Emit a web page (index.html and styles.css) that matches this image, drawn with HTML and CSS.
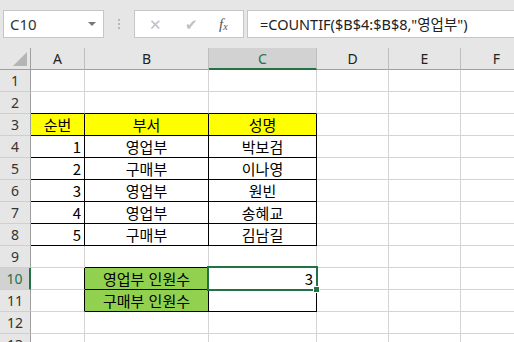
FILE: index.html
```html
<!DOCTYPE html>
<html lang="ko">
<head>
  <meta charset="UTF-8" />
  <title>COUNTIF</title>
  <link rel="stylesheet" href="styles.css">
</head>
<body>
  <div class="toolbar">
    <div class="namebox"><span>C10</span><span class="caret"></span></div>
    <div class="sep"><i></i><i></i><i></i></div>
    <div class="fxbox">
      <span class="btn">&#x2715;</span>
      <span class="btn check">&#x2714;</span>
      <span class="fx">f<sub>x</sub></span>
    </div>
    <div class="formula">=COUNTIF($B$4:$B$8,"영업부")</div>
  </div>

  <div class="sheet">
    <div class="ch corner"><span class="tri"></span></div><div class="ch">A</div><div class="ch">B</div><div class="ch sel">C</div><div class="ch">D</div><div class="ch">E</div><div class="ch">F</div>

    <div class="rh">1</div><div class="c"></div><div class="c"></div><div class="c"></div><div class="c"></div><div class="c"></div><div class="c"></div>
    <div class="rh">2</div><div class="c kb"></div><div class="c kb"></div><div class="c kb"></div><div class="c"></div><div class="c"></div><div class="c"></div>
    <div class="rh">3</div><div class="c kr kb yellow mid">순번</div><div class="c kr kb yellow mid">부서</div><div class="c kr kb yellow mid">성명</div><div class="c"></div><div class="c"></div><div class="c"></div>
    <div class="rh">4</div><div class="c kr kb num">1</div><div class="c kr kb mid">영업부</div><div class="c kr kb mid">박보검</div><div class="c"></div><div class="c"></div><div class="c"></div>
    <div class="rh">5</div><div class="c kr kb num">2</div><div class="c kr kb mid">구매부</div><div class="c kr kb mid">이나영</div><div class="c"></div><div class="c"></div><div class="c"></div>
    <div class="rh">6</div><div class="c kr kb num">3</div><div class="c kr kb mid">영업부</div><div class="c kr kb mid">원빈</div><div class="c"></div><div class="c"></div><div class="c"></div>
    <div class="rh">7</div><div class="c kr kb num">4</div><div class="c kr kb mid">영업부</div><div class="c kr kb mid">송혜교</div><div class="c"></div><div class="c"></div><div class="c"></div>
    <div class="rh">8</div><div class="c kr kb num">5</div><div class="c kr kb mid">구매부</div><div class="c kr kb mid">김남길</div><div class="c"></div><div class="c"></div><div class="c"></div>
    <div class="rh">9</div><div class="c"></div><div class="c kb"></div><div class="c kb"></div><div class="c"></div><div class="c"></div><div class="c"></div>
    <div class="rh sel">10</div><div class="c kr"></div><div class="c kr kb green mid">영업부 인원수</div><div class="c kr kb num">3</div><div class="c"></div><div class="c"></div><div class="c"></div>
    <div class="rh">11</div><div class="c kr"></div><div class="c kr kb green mid">구매부 인원수</div><div class="c kr kb"></div><div class="c"></div><div class="c"></div><div class="c"></div>
    <div class="rh">12</div><div class="c"></div><div class="c"></div><div class="c"></div><div class="c"></div><div class="c"></div><div class="c"></div>
    <div class="rh">13</div><div class="c"></div><div class="c"></div><div class="c"></div><div class="c"></div><div class="c"></div><div class="c"></div>

    <div class="cursor"></div>
    <div class="handle"></div>
  </div>
</body>
</html>
```

FILE: styles.css
```css
* { box-sizing: border-box; }
body {
  margin: 0;
  width: 514px;
  height: 342px;
  overflow: hidden;
  background: #fff;
  font-family: "Noto Sans", "Noto Sans CJK KR", sans-serif;
  color: #222;
}

/* formula bar */
.toolbar {
  height: 48px;
  background: #e6e6e6;
  display: flex;
  align-items: flex-start;
  padding: 10px 0 0 3px;
}
.namebox {
  width: 101px;
  height: 28px;
  background: #fff;
  border: 1px solid #c6c6c6;
  display: flex;
  align-items: center;
  justify-content: space-between;
  padding: 0 6px 0 6px;
  font-size: 15px;
  color: #333;
}
.caret {
  width: 0;
  height: 0;
  border-left: 4px solid transparent;
  border-right: 4px solid transparent;
  border-top: 4px solid #777;
  margin-right: 1px;
}
.sep {
  width: 30px;
  height: 28px;
  display: flex;
  flex-direction: column;
  align-items: center;
  justify-content: center;
  gap: 2px;
}
.sep i {
  width: 2px;
  height: 2px;
  background: #b9b9b9;
}
.fxbox {
  width: 110px;
  height: 28px;
  background: #fff;
  border: 1px solid #c6c6c6;
  display: flex;
  align-items: center;
  padding-left: 12px;
  gap: 20px;
}
.btn {
  font-size: 15px;
  color: #c0c0c0;
  width: 16px;
  text-align: center;
}
.fx {
  font-family: "Liberation Serif", serif;
  font-style: italic;
  font-size: 15px;
  color: #555;
  margin-left: 0;
}
.fx sub { font-size: 10px; vertical-align: -1px; }
.formula {
  flex: 1;
  height: 28px;
  margin-left: 3px;
  background: #fff;
  border: 1px solid #c6c6c6;
  border-right: none;
  padding-left: 12px;
  font-size: 14.5px;
  line-height: 26px;
  color: #222;
  white-space: nowrap;
}

/* grid */
.sheet {
  position: relative;
  display: grid;
  grid-template-columns: 31px 54px 124px 108px 72px 72px 72px;
  grid-auto-rows: 22px;
  width: 533px;
}
.ch {
  background: #e6e6e6;
  border-right: 1px solid #bdbdbd;
  border-bottom: 1px solid #9f9f9f;
  font-size: 14px;
  line-height: 21px;
  text-align: center;
}
.ch.sel {
  background: #d2d2d2;
  border-bottom: 2px solid #217346;
  color: #217346;
}
.corner { position: relative; border-right-color: #9f9f9f; }
.tri {
  position: absolute;
  right: 3px;
  bottom: 3px;
  width: 0;
  height: 0;
  border-left: 14px solid transparent;
  border-bottom: 14px solid #b5b5b5;
}
.rh {
  background: #e6e6e6;
  border-right: 1px solid #9f9f9f;
  border-bottom: 1px solid #cfcfcf;
  font-size: 14px;
  line-height: 21px;
  text-align: center;
  color: #333;
}
.rh.sel {
  background: #d2d2d2;
  border-right: 2px solid #217346;
  color: #217346;
}
.c {
  border-right: 1px solid #d4d4d4;
  border-bottom: 1px solid #d4d4d4;
  font-family: "Noto Sans CJK KR", sans-serif;
  font-size: 15px;
  line-height: 21px;
  padding: 0 3px;
  white-space: nowrap;
  overflow: hidden;
  color: #000;
}
.kr { border-right-color: #000; }
.kb { border-bottom-color: #000; }
.mid { text-align: center; }
.num { text-align: right; }
.yellow { background: #ffff00; }
.green { background: #92d050; }

.cursor {
  position: absolute;
  left: 207px;
  top: 218px;
  width: 111px;
  height: 25px;
  border: 2px solid #217346;
}
.handle {
  position: absolute;
  left: 313px;
  top: 238px;
  width: 7px;
  height: 7px;
  background: #217346;
  border: 1px solid #fff;
}
```
